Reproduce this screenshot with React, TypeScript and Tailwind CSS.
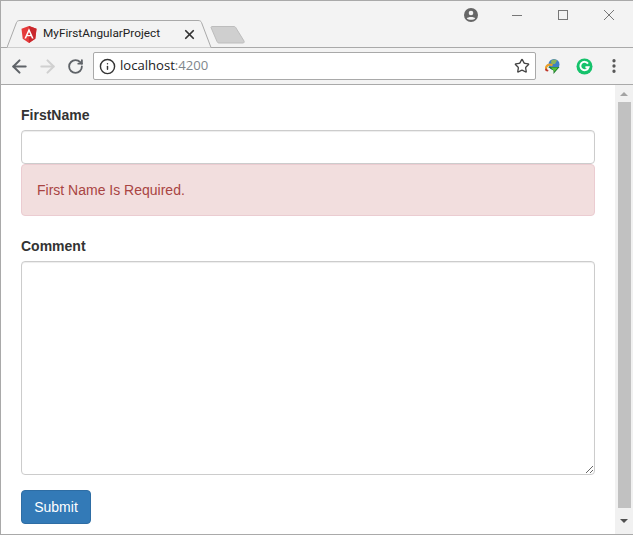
import React from 'react';
import { ArrowLeft, ArrowRight, RotateCw, Star, X, EllipsisVertical, Info } from 'lucide-react';

function AngularLogo() {
  return (
    <svg width="16" height="17" viewBox="0 0 16 17">
      <path d="M8 0 L15.5 2.7 L14.3 12.7 L8 17 L1.7 12.7 L0.5 2.7 Z" fill="#e53a3a" />
      <path d="M8 0 L15.5 2.7 L14.3 12.7 L8 17 Z" fill="#c9282d" />
      <path d="M8 2.2 L3.4 12.6 H5.1 L6 10.3 H10 L10.9 12.6 H12.6 Z M8 6 L9.4 9 H6.6 Z" fill="#fff" fillRule="evenodd" />
    </svg>
  );
}

function GrammarlyIcon() {
  return (
    <svg width="17" height="17" viewBox="0 0 17 17">
      <circle cx="8.5" cy="8.5" r="8" fill="#15c26b" />
      <path d="M12 5.6 A4.2 4.2 0 1 0 12.6 9.2 H9.4" fill="none" stroke="#fff" strokeWidth="1.9" />
    </svg>
  );
}

function IdmIcon() {
  return (
    <svg width="17" height="17" viewBox="0 0 17 17">
      <circle cx="10" cy="6.5" r="5.5" fill="#3f7fc4" />
      <path d="M7 3 Q10 0.5 13 2.5 L11 6 L7.5 6 Z" fill="#8fb45a" />
      <path d="M1 11 A5 5 0 0 1 9 6.5 L8 8.5 A3 3 0 0 0 3 11 Z" fill="#e8a02c" />
      <path d="M1 11 Q1 13.5 4 13.5 L4.5 12 Q3 12 3 10.5 Z" fill="#c0392b" />
      <path d="M4 9 H15.5 L9.5 16 V12.5 Z" fill="#1e7d2e" />
      <path d="M7 9.5 H14 L10.2 13.5 Z" fill="#57c23c" />
    </svg>
  );
}

function Tab() {
  return (
    <div className="relative w-[205px] h-[28px] ml-[6px] pl-[14px] pr-[15px] flex items-center">
      <svg className="absolute left-0 top-0" width="205" height="28" viewBox="0 0 205 28">
        <path d="M0 27.5 L9.500 2.500 C10 1.200 11 0.5 13 0.5 H191 C193 0.5 194 1.200 194.500 2.500 L204 27.5" fill="#f3f3f3" stroke="#a9a9a9" />
      </svg>
      <span className="relative mr-[6px] flex">
        <AngularLogo />
      </span>
      <span className="relative flex-1 text-[11.8px] text-[#222] font-['Roboto',sans-serif] whitespace-nowrap">MyFirstAngularProject</span>
      <X className="relative text-[#333]" size={15} strokeWidth={2.8} />
    </div>
  );
}

export default function App() {
  return (
    <div className="w-[633px] h-[535px] flex flex-col overflow-hidden bg-white border-l border-b border-t border-[#a9a9a9] font-['Liberation_Sans',sans-serif]">
      <div className="h-[47px] bg-[#f3f3f3] border-b border-[#a9a9a9] flex items-end relative shrink-0">
        <div className="-mb-px">
          <Tab />
        </div>
        <svg className="ml-[-2px] mb-[3px]" width="36" height="18" viewBox="0 0 36 18">
          <path d="M1 1.500 C1 1 1.500 0.5 2 0.5 H24 C25 0.5 25.500 1 26 2 L34 15 C34.500 16 34 17 33 17 H9 C8 17 7.500 16.500 7 15.500 Z" fill="#cfcfcf" stroke="#bdbdbd" />
        </svg>
        <div className="absolute top-0 right-0 h-[28px] flex items-center">
          <svg className="mr-[34px]" width="14" height="14" viewBox="0 0 14 14">
            <circle cx="7" cy="7" r="7" fill="#666" />
            <circle cx="7" cy="5" r="2.300" fill="#f3f3f3" />
            <path d="M2.800 10.500 C3.500 8.500 10.500 8.500 11.200 10.500 C10 12.200 4 12.200 2.800 10.500 Z" fill="#f3f3f3" />
          </svg>
          <svg className="mr-[36px]" width="10" height="10" viewBox="0 0 10 10">
            <path d="M0 5.500 H10" stroke="#777" />
          </svg>
          <svg className="mr-[36px]" width="10" height="10" viewBox="0 0 10 10">
            <rect x="0.5" y="0.5" width="9" height="9" fill="none" stroke="#777" />
          </svg>
          <svg className="mr-[19px]" width="10" height="10" viewBox="0 0 10 10">
            <path d="M0 0 L10 10 M10 0 L0 10" stroke="#777" />
          </svg>
        </div>
      </div>

      <div className="h-[37px] bg-[#f3f3f3] border-b border-[#a9a9a9] flex items-center shrink-0 pl-[4px]">
        <div className="w-[28px] flex justify-center">
          <ArrowLeft className="text-[#5f6368]" size={21} strokeWidth={2.4} />
        </div>
        <div className="w-[28px] flex justify-center">
          <ArrowRight className="text-[#d0d0d0]" size={21} strokeWidth={2.4} />
        </div>
        <div className="w-[28px] flex justify-center">
          <RotateCw className="text-[#5f6368]" size={17} strokeWidth={2.6} />
        </div>
        <div className="w-[443px] h-[28px] ml-[4px] bg-white border border-[#a9a9a9] rounded-[2px] flex items-center pl-[5px] pr-[5px]">
          <Info className="text-[#333] mr-[4px]" size={17} strokeWidth={2} />
          <span className="flex-1 text-[13.1px] text-[#222] font-['Open_Sans',sans-serif]">
            localhost<span className="text-[#80868b]">:4200</span>
          </span>
          <Star className="text-[#444]" size={16} strokeWidth={2} />
        </div>
        <div className="ml-[8px] flex">
          <IdmIcon />
        </div>
        <div className="ml-[15px] flex">
          <GrammarlyIcon />
        </div>
        <EllipsisVertical className="text-[#555] ml-[12px]" size={18} strokeWidth={2.4} />
      </div>

      <div className="flex-1 flex min-h-0">
        <div className="flex-1 pl-[20px] pr-[20px] pt-[20px] flex flex-col text-[14px] leading-[20px] text-[#333]">
          <label className="font-bold mb-[5px]">FirstName</label>
          <input className="h-[34px] w-full bg-white border border-[#ccc] rounded-[4px] shadow-[inset_0_1px_1px_rgba(0,0,0,0.075)]" />
          <div className="h-[52px] px-[15px] flex items-center bg-[#f2dede] border border-[#ebccd1] rounded-[4px] text-[#a94442]">
            First Name Is Required.
          </div>
          <label className="font-bold mt-[20px] mb-[5px]">Comment</label>
          <textarea className="h-[214px] w-full bg-white border border-[#ccc] rounded-[4px] shadow-[inset_0_1px_1px_rgba(0,0,0,0.075)]" />
          <button className="mt-[15px] w-[70px] h-[34px] bg-[#337ab7] border border-[#2e6da4] rounded-[4px] text-white text-[14px]">
            Submit
          </button>
        </div>
        <div className="w-[18px] bg-[#f1f1f1] flex flex-col items-center shrink-0">
          <div className="h-[17px] flex items-center justify-center">
            <div className="w-0 h-0 border-x-[4px] border-x-transparent border-b-[4px] border-b-[#a3a3a3]" />
          </div>
          <div className="w-[13px] flex-1 bg-[#c1c1c1]" />
          <div className="h-[26px] flex items-center justify-center">
            <div className="w-0 h-0 border-x-[4px] border-x-transparent border-t-[4px] border-t-[#505050]" />
          </div>
        </div>
      </div>
    </div>
  );
}
